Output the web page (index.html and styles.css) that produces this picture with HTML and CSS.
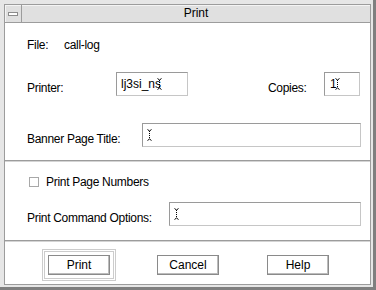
FILE: index.html
```html
<!DOCTYPE html>
<html>
<head>
<meta charset="utf-8">
<link rel="stylesheet" href="styles.css">
</head>
<body>
<div class="window">
  <div class="frame">
    <div class="titlebar">
      <div class="menu-btn"><span class="menu-icon"></span></div>
      <div class="title">Print</div>
    </div>
    <div class="content">
      <section class="sec sec1">
        <div class="row file-row"><span class="lbl-file">File:</span><span class="val">call-log</span></div>
        <div class="row field-row">
          <span class="lbl lbl-printer">Printer:</span>
          <div class="field f-printer">lj3si_ns<svg class="ibeam" width="5" height="12" viewBox="0 0 5 12"><path d="M0.5 0.5 L2.5 2 L4.5 0.5 M0.5 11.5 L2.5 10 L4.5 11.5" fill="none" stroke="#000" stroke-width="1"/><path d="M2.5 2 V10" stroke="#000" stroke-width="1" stroke-dasharray="1 1"/></svg></div>
          <span class="lbl lbl-copies">Copies:</span>
          <div class="field f-copies">1<svg class="ibeam" width="5" height="12" viewBox="0 0 5 12"><path d="M0.5 0.5 L2.5 2 L4.5 0.5 M0.5 11.5 L2.5 10 L4.5 11.5" fill="none" stroke="#000" stroke-width="1"/><path d="M2.5 2 V10" stroke="#000" stroke-width="1" stroke-dasharray="1 1"/></svg></div>
        </div>
        <div class="row field-row banner-row">
          <span class="lbl lbl-banner">Banner Page Title:</span>
          <div class="field f-wide"><svg class="ibeam" width="5" height="12" viewBox="0 0 5 12"><path d="M0.5 0.5 L2.5 2 L4.5 0.5 M0.5 11.5 L2.5 10 L4.5 11.5" fill="none" stroke="#000" stroke-width="1"/><path d="M2.5 2 V10" stroke="#000" stroke-width="1" stroke-dasharray="1 1"/></svg></div>
        </div>
      </section>
      <section class="sec sec2">
        <div class="row check-row"><span class="checkbox"></span><span class="val">Print Page Numbers</span></div>
        <div class="row field-row pco-row">
          <span class="lbl lbl-pco">Print Command Options:</span>
          <div class="field f-wide"><svg class="ibeam" width="5" height="12" viewBox="0 0 5 12"><path d="M0.5 0.5 L2.5 2 L4.5 0.5 M0.5 11.5 L2.5 10 L4.5 11.5" fill="none" stroke="#000" stroke-width="1"/><path d="M2.5 2 V10" stroke="#000" stroke-width="1" stroke-dasharray="1 1"/></svg></div>
        </div>
      </section>
      <section class="buttons">
        <div class="default-ring"><div class="default-ring2"><div class="btn">Print</div></div></div>
        <div class="btn btn-cancel">Cancel</div>
        <div class="btn btn-help">Help</div>
      </section>
    </div>
  </div>
</div>
</body>
</html>
```
FILE: styles.css
```css
html, body {
  margin: 0;
  padding: 0;
}
body {
  width: 376px;
  height: 290px;
  overflow: hidden;
  font-family: "Liberation Sans", Arial, sans-serif;
  font-size: 12px;
  letter-spacing: -0.3px;
  color: #000;
}
.window {
  box-sizing: border-box;
  width: 376px;
  height: 290px;
  background: #e6e6e6;
  border-style: solid;
  border-color: #7f7f7f;
  border-width: 0 3px 3px 0;
  padding: 4px 2px 2px 4px;
}
.frame {
  box-sizing: border-box;
  height: 100%;
  border: 1px solid #9c9c9c;
  display: flex;
  flex-direction: column;
}
.titlebar {
  height: 17px;
  display: flex;
  background: #e0e0e0;
  border-bottom: 1px solid #9c9c9c;
  box-shadow: inset 1px 1px 0 #f4f4f4;
}
.menu-btn {
  width: 16px;
  border-right: 1px solid #9c9c9c;
  display: flex;
  align-items: center;
  justify-content: center;
}
.menu-icon {
  display: block;
  width: 8px;
  height: 2px;
  background: #fff;
  border: 1px solid #8c8c8c;
}
.title {
  flex: 1;
  text-align: center;
  line-height: 17px;
  letter-spacing: 0;
  font-size: 12px;
}
.content {
  flex: 1;
  background: #fff;
  display: flex;
  flex-direction: column;
}
.sec {
  border-bottom: 1px solid #9c9c9c;
  box-shadow: 0 1px 0 #d4d4d4;
  margin-bottom: 1px;
  padding-left: 22px;
  padding-right: 9px;
}
.sec1 {
  padding-top: 15px;
  padding-bottom: 13px;
}
.row {
  display: flex;
  align-items: center;
  line-height: 14px;
}
.lbl-file {
  width: 37px;
}
.field-row {
  margin-top: 20px;
}
.banner-row {
  margin-top: 27px;
}
.lbl {
  white-space: nowrap;
  align-self: flex-end;
  margin-bottom: 1px;
}
.lbl-printer {
  width: 89px;
}
.lbl-copies {
  margin-left: 80px;
  width: 56px;
}
.lbl-banner {
  width: 115px;
}
.lbl-pco {
  width: 142px;
}
.field {
  box-sizing: border-box;
  height: 24px;
  border: 1px solid #9a9a9a;
  border-right-color: #c6c6c6;
  border-bottom-color: #c6c6c6;
  display: flex;
  align-items: center;
  padding-left: 4px;
  letter-spacing: 0;
}
.f-printer {
  width: 72px;
}
.f-printer .ibeam {
  margin-left: -4px;
}
.f-copies {
  width: 36px;
  padding-left: 5px;
}
.f-copies .ibeam {
  margin-left: -2px;
}
.f-wide {
  flex: 1;
}
.ibeam {
  display: block;
}
.sec2 {
  padding-top: 13px;
  padding-bottom: 14px;
}
.check-row {
  padding-left: 2px;
}
.checkbox {
  box-sizing: border-box;
  width: 10px;
  height: 10px;
  border: 1px solid #a8a8a8;
  margin-right: 7px;
}
.pco-row {
  margin-top: 13px;
}
.buttons {
  flex: 1;
  display: flex;
  align-items: flex-start;
  padding-left: 37px;
  padding-top: 7px;
}
.default-ring {
  border: 1px solid #cccccc;
  padding: 1px;
}
.default-ring2 {
  border: 1px solid #cccccc;
  padding: 3px;
}
.btn {
  box-sizing: border-box;
  width: 62px;
  height: 20px;
  border: 1px solid #8a8a8a;
  box-shadow: inset -1px -1px 0 #bcbcbc, inset 1px 1px 0 #ffffff;
  text-align: center;
  line-height: 18px;
  letter-spacing: 0;
}
.btn-cancel {
  margin-left: 41px;
  margin-top: 6px;
}
.btn-help {
  margin-left: 48px;
  margin-top: 6px;
}
```
